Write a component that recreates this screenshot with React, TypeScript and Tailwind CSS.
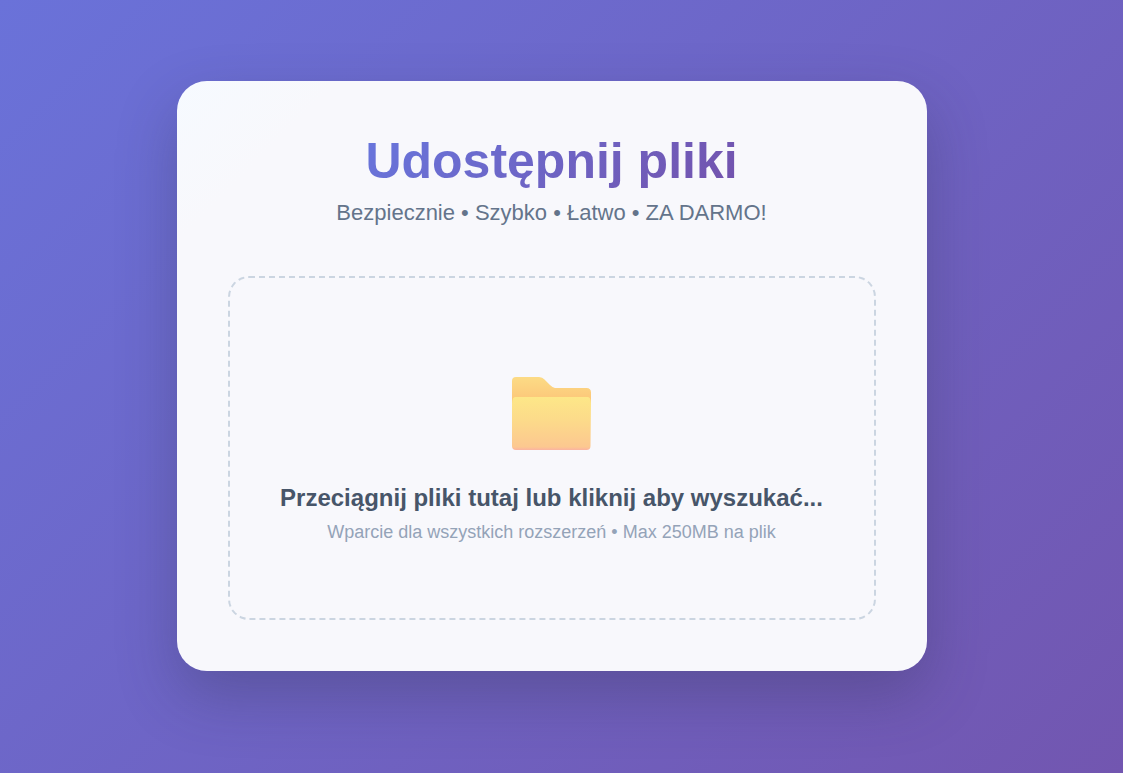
import { useState } from "react";

function FolderIcon() {
  return (
    <svg viewBox="0 0 80 74" className="h-[74px] w-20" aria-hidden="true">
      <defs>
        <linearGradient id="folder-back" x1="0" y1="0" x2="0" y2="22" gradientUnits="userSpaceOnUse">
          <stop offset="0" stopColor="#fcdb85" />
          <stop offset="1" stopColor="#fcc87a" />
        </linearGradient>
        <linearGradient id="folder-front" x1="0" y1="20" x2="0" y2="73" gradientUnits="userSpaceOnUse">
          <stop offset="0" stopColor="#fde788" />
          <stop offset="0.45" stopColor="#fcda8a" />
          <stop offset="0.94" stopColor="#fcc890" />
          <stop offset="1" stopColor="#fbb3a0" />
        </linearGradient>
      </defs>
      <path
        d="M0 4Q0 0 4 0H27Q30.500 0 32.500 2.500L38 8Q41 11 43 11H74.500Q79 11 79 15.500V26H0Z"
        fill="url(#folder-back)"
      />
      <path
        d="M0.500 23Q1 20 3.500 20H75.500Q78 20 78.500 23L79 26L78.500 69Q78.500 73 74.500 73H4Q0 73 0 69V26Z"
        fill="url(#folder-front)"
      />
    </svg>
  );
}

export default function App() {
  const [dragging, setDragging] = useState(false);

  return (
    <div className="flex min-h-screen items-center justify-center bg-linear-[135deg] from-[#6a72d9] to-[#7256b0] pr-5 pb-[21px] font-['Liberation_Sans',Arial,sans-serif]">
      <main className="w-full max-w-[750px] rounded-[30px] bg-linear-[135deg] from-[#f6faff] via-[#f8f8fc] via-12% to-[#f8f8fc] p-[51px] text-center shadow-[0_25px_60px_rgba(50,50,80,0.32)]">
        <header className="mb-[51px]">
          <h1 className="inline-block bg-linear-[135deg] from-[#6876dd] to-[#7352ac] bg-clip-text text-[50px] leading-[58px] font-bold text-transparent">
            Udostępnij pliki
          </h1>
          <p className="mt-[11px] text-[22px] leading-6 text-[#64748b]">
            Bezpiecznie • Szybko • Łatwo • ZA DARMO!
          </p>
        </header>

        <label
          htmlFor="files"
          onDragEnter={() => setDragging(true)}
          onDragLeave={() => setDragging(false)}
          className={`relative flex cursor-pointer flex-col items-center rounded-[21px] border-2 border-dashed px-4 pt-[99px] pb-[74px] focus-within:border-[#667eea] ${
            dragging ? "border-[#667eea]" : "border-[#cbd5e1]"
          }`}
        >
          <input id="files" type="file" multiple className="sr-only" />
          <FolderIcon />
          <span className="mt-[31px] text-2xl leading-8 font-bold text-[#475569]">
            Przeciągnij pliki tutaj lub kliknij aby wyszukać...
          </span>
          <span className="mt-1.5 text-lg leading-6 text-[#94a3b8]">
            Wparcie dla wszystkich rozszerzeń • Max 250MB na plik
          </span>
        </label>
      </main>
    </div>
  );
}
